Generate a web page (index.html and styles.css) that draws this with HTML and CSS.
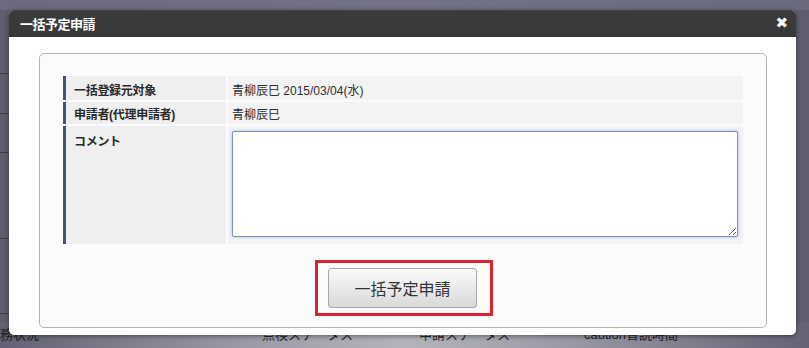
FILE: index.html
```html
<!DOCTYPE html>
<html lang="ja">
<head>
<meta charset="utf-8">
<title>一括予定申請</title>
<link rel="stylesheet" href="styles.css">
</head>
<body>
<div class="page">
  <div class="page-top"></div>
  <div class="page-lines">
    <span class="pl pl1"></span><span class="pl pl2"></span><span class="pl pl3"></span><span class="pl pl4"></span><span class="pl pl5"></span>
  </div>
  <div class="page-row">
    <span class="c1">務状況</span>
    <span class="c2">点検ステータス</span>
    <span class="c3">申請ステータス</span>
    <span class="c4">caution音読時間</span>
  </div>
</div>
<div class="modal">
  <div class="modal-head">
    <span class="modal-title">一括予定申請</span>
    <span class="modal-close">✖</span>
  </div>
  <div class="modal-body">
    <div class="panel">
      <table class="form">
        <tr class="r1">
          <th>一括登録元対象</th>
          <td>青柳辰巳 2015/03/04(水)</td>
        </tr>
        <tr class="r2">
          <th>申請者(代理申請者)</th>
          <td>青柳辰巳</td>
        </tr>
        <tr class="r3">
          <th>コメント</th>
          <td><textarea class="comment"></textarea></td>
        </tr>
      </table>
      <div class="actions">
        <div class="highlight">
          <button class="btn">一括予定申請</button>
        </div>
      </div>
    </div>
  </div>
</div>
</body>
</html>
```
FILE: styles.css
```css
html, body {
  margin: 0;
  padding: 0;
}
body {
  width: 809px;
  height: 348px;
  overflow: hidden;
  position: relative;
  background: #5f5e6f;
  font-family: "Liberation Sans", "Noto Sans CJK JP", sans-serif;
}
.page {
  width: 809px;
  height: 348px;
  display: flex;
  flex-direction: column;
}
.page-top {
  height: 10px;
  background: linear-gradient(90deg, #6c6b7d, #737286 50%, #6a6a7c);
}
.page-lines {
  flex: 1;
  position: relative;
}
.pl {
  display: block;
  position: absolute;
  left: 0;
  width: 9px;
  height: 1px;
  background: #3d3c4a;
}
.pl1 { top: 63px; }
.pl2 { top: 103px; }
.pl3 { top: 142px; }
.pl4 { top: 228px; }
.pl5 { top: 303px; }
.page-row {
  height: 26px;
  display: flex;
  align-items: flex-start;
  font-size: 13px;
  color: #1f1f26;
  background: linear-gradient(90deg, #626172 0%, #9a99a6 30%, #b4b4bc 50%, #9a99a6 70%, #646374 100%);
  padding-top: 2px;
  box-sizing: border-box;
  white-space: nowrap;
}
.page-row span { display: block; }
.c1 { width: 262px; }
.c2 { width: 157px; }
.c3 { width: 165px; }

.modal {
  position: absolute;
  left: 9px;
  top: 10px;
  width: 787px;
  height: 325px;
  background: #fff;
  border-radius: 5px;
  box-shadow: 0 1px 5px rgba(0, 0, 0, 0.45);
  overflow: hidden;
  display: flex;
  flex-direction: column;
}
.modal-head {
  height: 27px;
  flex: none;
  background: linear-gradient(#444 0, #3b3b3b 2px, #383838 100%);
  color: #fff;
  display: flex;
  align-items: center;
  justify-content: space-between;
  padding: 0 8px 0 11px;
}
.modal-title {
  font-size: 13px;
  font-weight: bold;
  letter-spacing: -0.5px;
}
.modal-close {
  font-size: 15px;
  font-weight: bold;
  font-family: "DejaVu Sans", sans-serif;
  line-height: 1;
}
.modal-body {
  flex: 1;
  padding: 16px 29px 7px 30px;
  display: flex;
}
.panel {
  flex: 1;
  border: 1px solid #b3b3b3;
  border-radius: 5px;
  background: #fbfbfd;
  padding: 20px 21px 0 21px;
  display: flex;
  flex-direction: column;
}
.form {
  border-collapse: separate;
  border-spacing: 2px;
  width: 100%;
  font-size: 12px;
  color: #222;
}
.form th {
  width: 160px;
  text-align: left;
  vertical-align: top;
  background: #efefef;
  border-left: 3px solid #44536f;
  font-weight: bold;
  padding: 5px 0 0 8px;
  letter-spacing: -0.3px;
  color: #2a2a2a;
}
.form td {
  background: #f3f3f3;
  vertical-align: top;
  padding: 5px 4px 0 4px;
  color: #2f2f2f;
}
.r1 th, .r1 td { height: 19px; }
.r2 th, .r2 td { height: 19px; padding-top: 3px; }
.r3 th { height: 112px; padding-top: 6px; }
.r3 td { padding: 5px 5px 6px 4px; }
.comment {
  display: block;
  box-sizing: border-box;
  width: 506px;
  height: 106px;
  border: 1px solid #7d8fc4;
  border-radius: 2px;
  background: #fff;
  box-shadow: 0 0 3px rgba(110, 140, 220, 0.6);
  resize: both;
  margin: 0;
  outline: none;
}
.actions {
  display: flex;
  justify-content: center;
  padding-top: 14px;
}
.highlight {
  border: 3px solid #d9232d;
  padding: 5px 13px 5px 10px;
  margin-left: 2px;
}
.btn {
  display: block;
  width: 149px;
  height: 40px;
  border: 1px solid #a9a9a9;
  border-radius: 3px;
  background: linear-gradient(#fbfbfb, #e9e9e9 50%, #d9d9d9);
  font-family: "Liberation Sans", "Noto Sans CJK JP", sans-serif;
  font-size: 16px;
  color: #333;
  padding: 0;
}
```
